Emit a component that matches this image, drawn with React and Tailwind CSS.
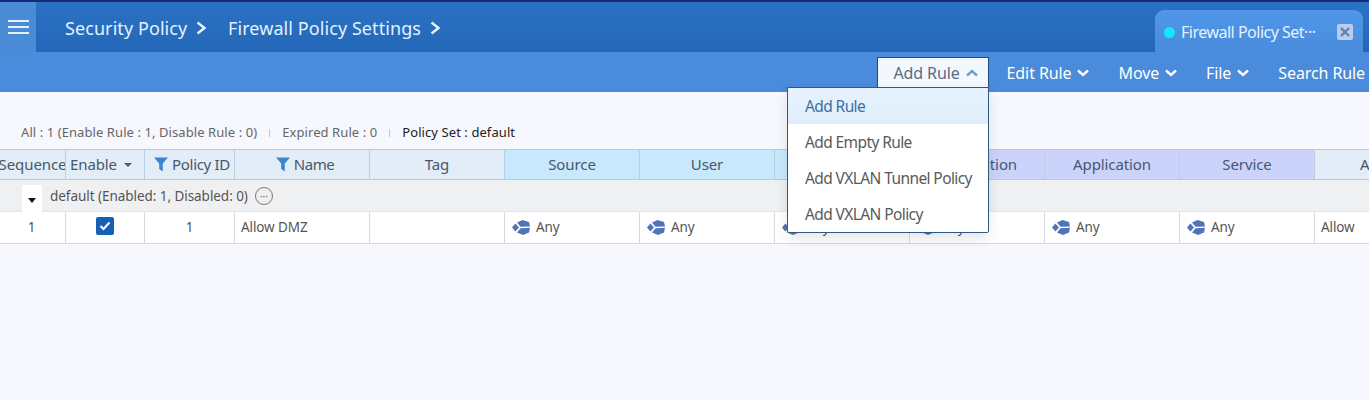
import React from "react";

function Chevron({ up, className = "" }) {
  return (
    <svg width="12" height="8" viewBox="0 0 12 8" className={className} fill="none" stroke="currentColor" strokeWidth="2.4">
      <path d={up ? "M1 6.5 L6 2 L11 6.5" : "M1 1.5 L6 6 L11 1.5"} />
    </svg>
  );
}

function Crumb({ children, className = "" }) {
  return (
    <div className={`flex items-center gap-[9px] ${className}`}>
      <span>{children}</span>
      <svg width="11" height="14" viewBox="0 0 11 14" fill="none" stroke="#e8f3ff" strokeWidth="2.4">
        <path d="M1.5 1.5 L8.5 7 L1.5 12.5" />
      </svg>
    </div>
  );
}

function Funnel() {
  return (
    <svg width="14" height="15" viewBox="0 0 14 15" className="shrink-0">
      <path d="M0 0.5 H14 L8.8 6.5 V14.5 L5.2 12 V6.5 Z" fill="#3f84d0" />
    </svg>
  );
}

function AnyIcon() {
  return (
    <svg width="18" height="15" viewBox="0 0 18 15" className="shrink-0">
      <path d="M0 7.5 L3.4 3.6 L7 7.6 L3.4 11.6 Z" fill="#4f74b8" />
      <path d="M5 2.5 L10.5 0 L17 2 L18 6.4 L8.5 6.8 Z" fill="#4f74b8" />
      <path d="M8.5 8.2 L18 7.8 L17 12.5 L11 15 L5 12.5 Z" fill="#4f74b8" />
    </svg>
  );
}

function Tool({ label }) {
  return (
    <div className="flex items-center gap-[6px] text-white">
      <span>{label}</span>
      <Chevron />
    </div>
  );
}

const headers = [
  { w: "w-[66px]", label: "Sequence", bg: "bg-[#e3edf8]", cls: "justify-center" },
  { w: "w-[79px]", label: "Enable", bg: "bg-[#e3edf8]", caret: true, cls: "pl-[4px]" },
  { w: "w-[90px]", label: "Policy ID", bg: "bg-[#e3edf8]", funnel: true, cls: "justify-end pr-[4px] tracking-[-0.3px]" },
  { w: "w-[135px]", label: "Name", bg: "bg-[#e3edf8]", funnel: true, cls: "justify-center pl-[6px] tracking-[-0.4px]" },
  { w: "w-[135px]", label: "Tag", bg: "bg-[#e3edf8]", cls: "justify-center" },
  { w: "w-[135px]", label: "Source", bg: "bg-[#c8e9fd]", cls: "justify-center" },
  { w: "w-[135px]", label: "User", bg: "bg-[#c8e9fd]", cls: "justify-center" },
  { w: "w-[135px]", label: "Destination", bg: "bg-[#c8e9fd]", cls: "justify-center" },
  { w: "w-[135px]", label: "Destination", bg: "bg-[#ccd3fb]", cls: "justify-center" },
  { w: "w-[135px]", label: "Application", bg: "bg-[#ccd3fb]", cls: "justify-center" },
  { w: "w-[135px]", label: "Service", bg: "bg-[#ccd3fb]", cls: "justify-center" },
  { w: "w-[135px]", label: "Action", bg: "bg-[#e3edf8]", cls: "justify-center" },
];

function Any() {
  return (
    <div className="flex items-center gap-[6px] pl-[7px] text-[#555]">
      <AnyIcon />
      <span>Any</span>
    </div>
  );
}

export default function App() {
  return (
    <div className="relative h-[400px] w-[1369px] overflow-hidden bg-[#f6f8fd] font-['Noto_Sans',sans-serif] text-[14px]">
      <div className="flex h-[52px] border-t-2 border-[#1a2a7a] bg-gradient-to-b from-[#2b72c4] to-[#2467b8]">
        <div className="flex h-[50px] w-[36px] items-center justify-center bg-[#4a8bd6]">
          <div className="flex w-[21px] flex-col gap-[4px]">
            <div className="h-[2px] bg-[#e6f0fa]" />
            <div className="h-[2px] bg-[#e6f0fa]" />
            <div className="h-[2px] bg-[#e6f0fa]" />
          </div>
        </div>
        <div className="flex h-[50px] items-center pl-[29px] pt-[2px] text-[18px] tracking-[0.08px] text-[#e3f2ff]">
          <Crumb className="w-[163px]">Security Policy</Crumb>
          <Crumb>Firewall Policy Settings</Crumb>
        </div>
        <div className="ml-auto mr-[6px] mt-[8px] flex h-[42px] w-[208px] items-center rounded-t-[9px] bg-gradient-to-b from-[#4f97ea] to-[#4a8bdb] pl-[9px] pt-[2px] text-[16px] tracking-[-0.5px] text-[#e3f2ff]">
          <div className="mr-[6px] h-[11px] w-[11px] rounded-full bg-[#14e6fb]" />
          <span>Firewall Policy Set···</span>
          <div className="ml-[22px] flex h-[16px] w-[16px] items-center justify-center rounded-[2px] bg-[#b9cdea]">
            <svg width="10" height="10" viewBox="0 0 10 10" stroke="#5a83b8" strokeWidth="2.4">
              <path d="M1 1 L9 9 M9 1 L1 9" />
            </svg>
          </div>
        </div>
      </div>

      <div className="flex h-[40px] items-center justify-end gap-[29px] bg-[#4a8bdb] pr-[4px] pt-[2px] text-[16px] tracking-[-0.1px]">
        <div className="mb-[5px] mr-[-11px] flex h-[30px] w-[112px] items-center justify-center gap-[6px] self-end border border-b-0 border-[#1f4f80] bg-[#f2f8fe] pl-[6px] pt-[1px] text-[#5a6c80]">
          <span>Add Rule</span>
          <Chevron up className="text-[#6f9cc8]" />
        </div>
        <Tool label="Edit Rule" />
        <Tool label="Move" />
        <Tool label="File" />
        <span className="text-white">Search Rule</span>
      </div>

      <div className="flex h-[57px] items-end pb-[7px] pl-[21px] text-[13px] tracking-[0.08px] text-[#666]">
        <span>All : 1 (Enable Rule : 1, Disable Rule : 0)</span>
        <span className="mx-[12px] mb-[5px] h-[8px] w-px bg-[#c4c8cc]" />
        <span>Expired Rule : 0</span>
        <span className="mx-[12px] mb-[5px] h-[8px] w-px bg-[#c4c8cc]" />
        <span className="text-[#222]">Policy Set : default</span>
      </div>

      <div className="flex h-[31px] w-[1449px] border-y border-[#b9c9de] text-[15px] tracking-[-0.1px] text-[#46586c]">
        {headers.map((h, i) => (
          <div
            key={i}
            className={`${h.w} ${h.bg} ${h.cls} flex shrink-0 items-center gap-[4px] overflow-hidden whitespace-nowrap border-r border-[#bccde0]`}
          >
            {h.funnel && <Funnel />}
            <span>{h.label}</span>
            {h.caret && <span className="ml-[3px] h-0 w-0 border-x-[4px] border-t-[4px] border-x-transparent border-t-[#556]" />}
          </div>
        ))}
      </div>

      <div className="flex h-[32px] items-center border-b border-[#e4e6ea] bg-[#eff0f2] pl-[22px] text-[13.5px] tracking-[-0.05px] text-[#555]">
        <div className="mr-[8px] mt-[6px] flex h-[27px] w-[20px] items-center justify-center bg-white">
          <span className="mt-[4px] h-0 w-0 border-x-[4px] border-t-[5px] border-x-transparent border-t-[#111]" />
        </div>
        <span className="mt-[1px]">default (Enabled: 1, Disabled: 0)</span>
        <div className="ml-[7px] flex h-[18px] w-[18px] items-center justify-center rounded-full border border-[#777] text-[10px] leading-none text-[#666]">
          ···
        </div>
      </div>

      <div className="flex h-[32px] w-[1449px] border-b border-[#d5dbe3] bg-white text-[13.5px] tracking-[-0.1px] text-[#555] [&>div]:shrink-0 [&>div]:border-r [&>div]:border-[#d5dbe3]">
        <div className="flex w-[66px] items-center justify-center pr-[2px]">1</div>
        <div className="flex w-[79px] items-center justify-center pb-[3px]">
          <div className="flex h-[18px] w-[18px] items-center justify-center rounded-[2px] bg-[#1560b5]">
            <svg width="12" height="10" viewBox="0 0 12 10" fill="none" stroke="#fff" strokeWidth="2">
              <path d="M1.5 5 L4.5 8 L10.5 1.5" />
            </svg>
          </div>
        </div>
        <div className="flex w-[90px] items-center justify-center">1</div>
        <div className="flex w-[135px] items-center pl-[6px]">Allow DMZ</div>
        <div className="w-[135px]" />
        <div className="flex w-[135px] items-center"><Any /></div>
        <div className="flex w-[135px] items-center"><Any /></div>
        <div className="flex w-[135px] items-center"><Any /></div>
        <div className="flex w-[135px] items-center"><Any /></div>
        <div className="flex w-[135px] items-center"><Any /></div>
        <div className="flex w-[135px] items-center"><Any /></div>
        <div className="flex w-[135px] items-center pl-[6px]">Allow</div>
      </div>

      <div className="absolute left-[787px] top-[87px] w-[202px] rounded-b-[2px] border border-[#2c5a80] bg-white text-[15.5px] tracking-[-0.6px] text-[#5a5a5a] shadow-[0_6px_14px_rgba(0,0,0,0.1)] [&>div]:pt-[1px]">
        <div className="flex h-[36px] items-center bg-gradient-to-b from-[#e6f3fe] to-[#e0eefc] pl-[17px] text-[#3b6ea5]">Add Rule</div>
        <div className="flex h-[36px] items-center pl-[17px]">Add Empty Rule</div>
        <div className="flex h-[36px] items-center pl-[17px]">Add VXLAN Tunnel Policy</div>
        <div className="flex h-[36px] items-center pl-[17px]">Add VXLAN Policy</div>
      </div>
    </div>
  );
}
